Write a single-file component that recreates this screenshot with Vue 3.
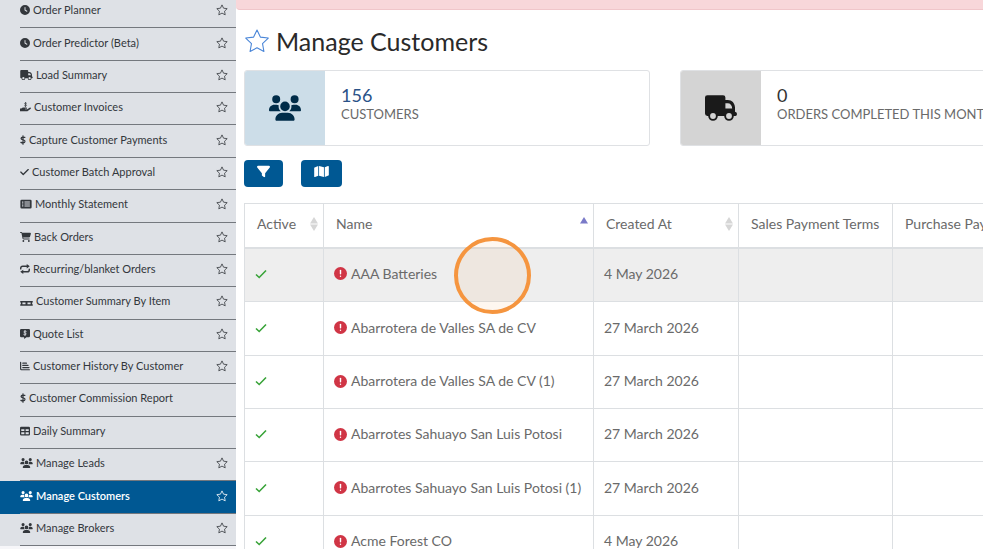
<script setup>
import { ref } from "vue";

const icons = {
	clock: {
		box: "0 0 512 512",
		width: 10,
		fill: "M256 0a256 256 0 1 1 0 512A256 256 0 1 1 256 0zM232 120V256c0 8 4 15.5 10.7 20l96 64c11 7.4 25.9 4.4 33.3-6.7s4.4-25.9-6.7-33.3L280 243.2V120c0-13.3-10.7-24-24-24s-24 10.7-24 24z",
	},
	truck: {
		box: "0 0 640 512",
		width: 13,
		fill: "M48 0H360Q408 0 408 48V96H456C540 96 596 160 600 244V330Q640 336 640 376Q640 416 608 416H576A96 96 0 0 1 384 416H256A96 96 0 0 1 64 416H48Q0 416 0 368V48Q0 0 48 0zM408 160V264H544C540 200 505 160 456 160zM160 358a58 58 0 1 0 0 116a58 58 0 1 0 0 -116zM480 358a58 58 0 1 0 0 116a58 58 0 1 0 0 -116z",
	},
	hand: {
		box: "0 0 576 512",
		width: 11,
		fill: "M0 336H70L120 300Q145 288 175 288H336Q368 292 368 320Q365 350 336 352H260V374H384L500 292Q535 272 562 298Q588 330 550 358L422 452Q390 480 350 480H0z",
		line: "M346 62Q325 44 288 46Q240 50 242 86Q246 116 288 122Q340 130 342 166Q340 202 288 206Q250 206 232 188M288 8V244",
		stroke: 36,
	},
	dollar: {
		box: "0 0 320 512",
		width: 6,
		line: "M256 118Q205 98 155 100Q65 102 58 166Q56 220 132 240L196 257Q270 278 264 344Q253 412 160 414Q100 412 48 382M160 32V480",
		stroke: 66,
	},
	check: {
		box: "0 0 448 512",
		width: 9,
		fill: "M438.6 105.4c12.5 12.5 12.5 32.8 0 45.3l-256 256c-12.5 12.5-32.8 12.5-45.3 0l-128-128c-12.5-12.5-12.5-32.8 0-45.3s32.8-12.5 45.3 0L160 338.7 393.4 105.4c12.5-12.5 32.8-12.5 45.3 0z",
	},
	list: {
		box: "0 0 576 512",
		width: 12,
		fill: "M64 32H512Q576 32 576 96V416Q576 480 512 480H64Q0 480 0 416V96Q0 32 64 32zM90 126V186H150V126zM90 226V286H150V226zM90 326V386H150V326zM210 132V180H486V132zM210 232V280H486V232zM210 332V380H486V332z",
	},
	cart: {
		box: "0 0 576 512",
		width: 11,
		fill: "M0 24C0 10.7 10.7 0 24 0H69.5c22 0 41.5 12.8 50.6 32h411c26.3 0 45.5 25 38.6 50.4l-41 152.3c-8.5 31.4-37 53.3-69.5 53.3H170.7l5.4 28.5c2.2 11.3 12.1 19.5 23.6 19.5H488c13.3 0 24 10.7 24 24s-10.7 24-24 24H199.7c-34.6 0-64.3-24.6-70.7-58.5L77.4 54.5c-.7-3.8-4-6.5-7.9-6.5H24C10.7 48 0 37.3 0 24zM128 464a48 48 0 1 1 96 0 48 48 0 1 1 -96 0zm336-48a48 48 0 1 1 0 96 48 48 0 1 1 0-96z",
	},
	repeat: {
		box: "0 0 512 512",
		width: 10,
		fill: "M344 0L500 112L344 224zM168 288L12 400L168 512z",
		line: "M36 250V224Q36 112 140 112H370M476 262V288Q476 400 372 400H142",
		stroke: 72,
	},
	pallet: {
		box: "0 0 640 512",
		width: 13,
		fill: "M0 256H640V330H608V424H640V498H0V424H32V330H0zM110 330V424H270V330zM370 330V424H530V330z",
	},
	quote: {
		box: "0 0 512 512",
		width: 10,
		fill: "M64 0H448Q512 0 512 64V352Q512 416 448 416H330L210 512V416H64Q0 416 0 352V64Q0 0 64 0z",
		cut: "M318 126Q285 106 250 110Q194 116 200 158Q204 188 256 200Q318 214 316 254Q308 298 250 298Q216 296 192 280M256 76V334",
		stroke: 44,
	},
	chart: {
		box: "0 0 512 512",
		width: 10,
		line: "M32 64V400Q32 448 80 448H480M144 112H330M144 224H410M144 336H460",
		stroke: 62,
	},
	table: {
		box: "0 0 512 512",
		width: 10,
		fill: "M64 32H448Q512 32 512 96V416Q512 480 448 480H64Q0 480 0 416V96Q0 32 64 32zM64 160V256H224V160zM288 160V256H448V160zM64 320V416H224V320zM288 320V416H448V320z",
	},
	users: {
		box: "0 0 640 512",
		width: 13,
		fill: "M144 0a80 80 0 1 1 0 160A80 80 0 1 1 144 0zM512 0a80 80 0 1 1 0 160A80 80 0 1 1 512 0zM0 298.7C0 239.8 47.8 192 106.7 192h42.7c15.9 0 31 3.5 44.6 9.7c-1.3 7.2-1.9 14.7-1.9 22.3c0 38.2 16.8 72.5 43.3 96H21.3C9.6 320 0 310.4 0 298.7zM405.3 320c26.6-23.5 43.3-57.8 43.3-96c0-7.6-.7-15-1.9-22.3c13.6-6.3 28.7-9.7 44.6-9.7h42.7C592.2 192 640 239.8 640 298.7c0 11.8-9.6 21.3-21.3 21.3H405.3zM224 224a96 96 0 1 1 192 0 96 96 0 1 1 -192 0zM128 485.3C128 411.7 187.7 352 261.3 352H378.7C452.3 352 512 411.7 512 485.3c0 14.7-11.9 26.7-26.7 26.7H154.7c-14.7 0-26.7-11.9-26.7-26.7z",
	},
};

const starPath = "M12 1.8L15.1 8.4L22.4 9.3L17.1 14.4L18.4 21.7L12 18.2L5.6 21.7L6.9 14.4L1.6 9.3L8.9 8.4Z";

const menu = [
	{ label: "Order Planner", icon: "clock", star: true },
	{ label: "Order Predictor (Beta)", icon: "clock", star: true },
	{ label: "Load Summary", icon: "truck", star: true },
	{ label: "Customer Invoices", icon: "hand", star: true },
	{ label: "Capture Customer Payments", icon: "dollar", star: true },
	{ label: "Customer Batch Approval", icon: "check", star: true },
	{ label: "Monthly Statement", icon: "list", star: true },
	{ label: "Back Orders", icon: "cart", star: true },
	{ label: "Recurring/blanket Orders", icon: "repeat", star: true },
	{ label: "Customer Summary By Item", icon: "pallet", star: true },
	{ label: "Quote List", icon: "quote", star: true },
	{ label: "Customer History By Customer", icon: "chart", star: true },
	{ label: "Customer Commission Report", icon: "dollar", star: false },
	{ label: "Daily Summary", icon: "table", star: false },
	{ label: "Manage Leads", icon: "users", star: true },
	{ label: "Manage Customers", icon: "users", star: true },
	{ label: "Manage Brokers", icon: "users", star: true },
];

const current = ref("Manage Customers");

const stats = [
	{ value: "156", label: "Customers", icon: "users", theme: "blue" },
	{ value: "0", label: "Orders completed this month", icon: "truck", theme: "gray" },
];

const columns = [
	{ key: "active", label: "Active", sort: "both" },
	{ key: "name", label: "Name", sort: "asc" },
	{ key: "created", label: "Created At", sort: "both" },
	{ key: "sales", label: "Sales Payment Terms" },
	{ key: "purchase", label: "Purchase Payment Terms" },
];

const customers = [
	{ name: "AAA Batteries", created: "4 May 2026" },
	{ name: "Abarrotera de Valles SA de CV", created: "27 March 2026" },
	{ name: "Abarrotera de Valles SA de CV (1)", created: "27 March 2026" },
	{ name: "Abarrotes Sahuayo San Luis Potosi", created: "27 March 2026" },
	{ name: "Abarrotes Sahuayo San Luis Potosi (1)", created: "27 March 2026" },
	{ name: "Acme Forest CO", created: "4 May 2026" },
];
</script>

<template>
	<div class="page">
		<nav class="sidebar">
			<ul>
				<li v-for="item in menu" :key="item.label" :class="{ active: item.label === current }">
					<a href="#" @click.prevent="current = item.label">
						<svg :viewBox="icons[item.icon].box" :width="icons[item.icon].width" height="10">
							<path v-if="icons[item.icon].fill" class="solid" :d="icons[item.icon].fill" />
							<path v-if="icons[item.icon].line" class="line" :d="icons[item.icon].line" :stroke-width="icons[item.icon].stroke" />
							<path v-if="icons[item.icon].cut" class="cut" :d="icons[item.icon].cut" :stroke-width="icons[item.icon].stroke" />
						</svg>
						<span>{{ item.label }}</span>
					</a>
					<button v-if="item.star" type="button" class="star" :aria-label="'Favourite ' + item.label">
						<svg viewBox="0 0 24 24" width="12" height="12"><path :d="starPath" /></svg>
					</button>
				</li>
			</ul>
		</nav>

		<main>
			<div class="alert" role="alert"></div>

			<header>
				<button type="button" class="star big" aria-label="Favourite page">
					<svg viewBox="0 0 24 24" width="26" height="26"><path :d="starPath" /></svg>
				</button>
				<h1>Manage Customers</h1>
			</header>

			<section class="stats">
				<article v-for="stat in stats" :key="stat.label" :class="stat.theme">
					<div class="badge">
						<svg :viewBox="icons[stat.icon].box" width="32" height="26">
							<path class="solid" :d="icons[stat.icon].fill" />
						</svg>
					</div>
					<div class="figures">
						<strong>{{ stat.value }}</strong>
						<span>{{ stat.label }}</span>
					</div>
				</article>
			</section>

			<div class="tools">
				<button type="button" aria-label="Filter">
					<svg viewBox="0 0 512 512" width="13" height="13">
						<path d="M3.9 54.9C10.5 40.9 24.5 32 40 32H472c15.5 0 29.5 8.9 36.1 22.9s4.6 30.5-5.2 42.5L320 320.9V448c0 12.1-6.8 23.2-17.7 28.6s-23.8 4.3-33.5-3l-64-48c-8.1-6-12.8-15.5-12.8-25.6V320.9L9 97.3C-.7 85.4-2.8 68.8 3.9 54.9z" />
					</svg>
				</button>
				<button type="button" aria-label="Map">
					<svg viewBox="0 0 576 512" width="15" height="13">
						<path d="M384 476.1L192 421.2V35.9L384 90.8V476.1zm32-1.2V88.4L543.1 37.5c15.8-6.3 32.9 5.3 32.9 22.3V394.6c0 9.8-6 18.6-15.1 22.3L416 474.8zM15.1 95.1L160 37.2V423.6L32.9 474.5C17.1 480.8 0 469.2 0 452.2V117.4c0-9.8 6-18.6 15.1-22.3z" />
					</svg>
				</button>
			</div>

			<div class="grid">
				<table>
					<colgroup>
						<col v-for="col in columns" :key="col.key" :class="'col-' + col.key" />
					</colgroup>
					<thead>
						<tr>
							<th v-for="col in columns" :key="col.key" scope="col">
								<div class="heading">
									<span>{{ col.label }}</span>
									<svg v-if="col.sort" :class="col.sort" viewBox="0 0 8 14" width="8" height="14">
										<path d="M4 0L8 6.5H0z" />
										<path v-if="col.sort === 'both'" d="M4 14L0 7.5H8z" />
									</svg>
								</div>
							</th>
						</tr>
					</thead>
					<tbody>
						<tr v-for="customer in customers" :key="customer.name">
							<td>
								<svg class="tick" viewBox="0 0 12 12" width="12" height="12"><path d="M1 6.5L4.2 9.5L11 2.5" /></svg>
							</td>
							<td>
								<div class="name">
									<svg viewBox="0 0 512 512" width="13" height="13">
										<circle cx="256" cy="256" r="256" />
										<path d="M256 136V268" />
										<path d="M256 366V368" />
									</svg>
									<span>{{ customer.name }}</span>
								</div>
							</td>
							<td>{{ customer.created }}</td>
							<td></td>
							<td></td>
						</tr>
					</tbody>
				</table>
				<div class="pointer"></div>
			</div>
		</main>
	</div>
</template>

<style>
body {
	background: #fff;
	overflow: hidden;
}
</style>

<style scoped>
.page {
	display: flex;
	height: 100vh;
	overflow: hidden;
	font-family: Lato, "Liberation Sans", sans-serif;
	color: #6a6a6a;
}

button {
	border: 0;
	padding: 0;
	background: none;
	cursor: pointer;
}

svg {
	display: block;
	flex: none;
}

.solid {
	fill: currentColor;
	fill-rule: evenodd;
}

.line,
.cut {
	fill: none;
	stroke: currentColor;
	stroke-linecap: round;
	stroke-linejoin: round;
}

.cut {
	stroke: #dee1e6;
}

.sidebar {
	box-sizing: border-box;
	flex: 0 0 236px;
	display: flex;
	padding-bottom: 3px;
	background: linear-gradient(#dee1e6, #dee1e6) content-box, #f6f6f9;
}

/* the list is scrolled a few pixels under the top edge */
.sidebar ul {
	flex: 1;
	display: flex;
	flex-direction: column;
	margin: -4px 0 0;
	padding: 0;
	list-style: none;
}

.sidebar li {
	flex: 1;
	display: flex;
	align-items: center;
	padding-left: 20px;
	color: #33373c;
	background: linear-gradient(#74787e, #74787e) 20px 100% / 100% 1px no-repeat;
}

.sidebar li.active {
	background-color: #005893;
	color: #fff;
}

.sidebar a {
	flex: 1;
	display: flex;
	align-items: center;
	gap: 3px;
	padding-bottom: 4px;
	color: inherit;
	font-size: 11px;
	line-height: 16px;
	white-space: nowrap;
	text-decoration: none;
}

.sidebar .active a {
	font-weight: 600;
}

.star {
	margin-right: 8px;
	padding-bottom: 4px;
	color: inherit;
}

.star path {
	fill: none;
	stroke: currentColor;
	stroke-width: 1.6;
	stroke-linejoin: round;
}

main {
	flex: 1;
	min-width: 0;
	overflow: hidden;
}

.alert {
	box-sizing: border-box;
	height: 10px;
	border-bottom: 1px solid #f0c6ca;
	border-radius: 0 0 0 4px;
	background: #f8d7da;
}

header {
	display: flex;
	align-items: center;
	gap: 6px;
	padding: 15px 8px 13px;
}

.star.big {
	margin: 0;
	padding: 0;
	color: #4a86d8;
}

.star.big path {
	stroke-width: 1;
}

h1 {
	margin: 0;
	color: #2a2a2a;
	font-size: 25px;
	font-weight: 400;
	line-height: 32px;
}

.stats {
	display: grid;
	grid-template-columns: repeat(2, minmax(406px, 1fr));
	gap: 30px;
	margin-left: 8px;
}

.stats article {
	display: flex;
	border: 1px solid #dfe1e4;
	border-radius: 3px;
	overflow: hidden;
}

.badge {
	display: flex;
	align-items: center;
	justify-content: center;
	width: 80px;
	height: 74px;
}

.blue .badge {
	background: #ccdde8;
	color: #002c49;
}

.gray .badge {
	background: #d4d4d4;
	color: #1a1a1a;
}

.figures {
	display: flex;
	flex-direction: column;
	padding: 14px 16px;
	white-space: nowrap;
}

.figures strong {
	font-size: 18px;
	font-weight: 400;
	line-height: 20px;
	color: #333;
}

.blue strong {
	color: #2a5288;
}

.figures span {
	font-size: 13px;
	line-height: 18px;
	text-transform: uppercase;
}

.tools {
	display: flex;
	gap: 18px;
	padding: 14px 8px 16px;
}

.tools button {
	height: 27px;
	padding: 0 13px 4px;
	border-radius: 4px;
	background: #005893;
}

.tools path {
	fill: #fff;
}

.grid {
	position: relative;
	margin-left: 8px;
}

table {
	width: 849px;
	table-layout: fixed;
	border-collapse: collapse;
	font-size: 14px;
	line-height: 20px;
}

.col-active {
	width: 79px;
}

.col-name {
	width: 270px;
}

.col-created {
	width: 145px;
}

.col-sales {
	width: 154px;
}

th,
td {
	box-sizing: border-box;
	border: 1px solid #dcdfe2;
	padding: 0 10px 2px;
	text-align: left;
	white-space: nowrap;
}

th {
	height: 44px;
	padding: 0 5px 2px 12px;
	border-bottom-width: 2px;
	font-weight: 400;
}

td {
	height: 53px;
}

/* rows average a little more than 53 */
tbody tr:first-child td,
tbody tr:nth-child(3n + 2) td {
	height: 54px;
}

tbody tr:first-child {
	background: #eeeeee;
}

.heading {
	display: flex;
	align-items: center;
	justify-content: space-between;
}

.heading svg {
	fill: #d6d6d6;
}

.heading .asc {
	fill: #7a7ac8;
}

.tick {
	fill: none;
	stroke: #38a338;
	stroke-width: 1.6;
}

.name {
	display: flex;
	align-items: center;
	gap: 4px;
}

.name circle {
	fill: #d03545;
}

.name path {
	stroke: #fff;
	stroke-width: 56;
	stroke-linecap: round;
}

/* click marker that floats over the first row */
.pointer {
	position: absolute;
	top: 34px;
	left: 210px;
	box-sizing: border-box;
	width: 77px;
	height: 77px;
	border: 4px solid #f5953f;
	border-radius: 50%;
	background: rgba(245, 149, 63, 0.08);
}
</style>
